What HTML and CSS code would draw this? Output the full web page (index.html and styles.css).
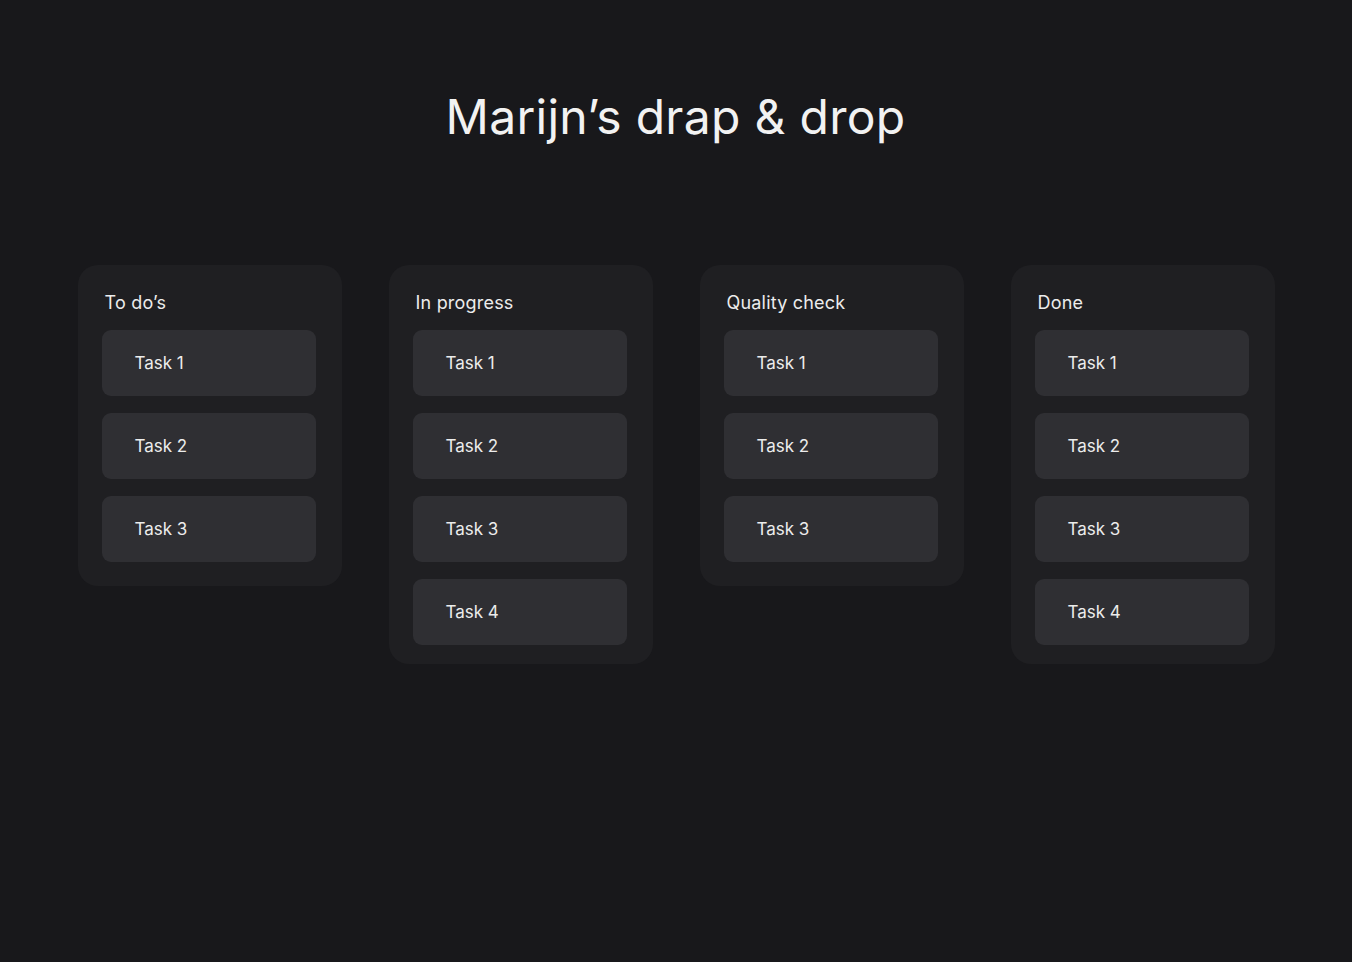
FILE: index.html
```html
<!DOCTYPE html>
<html lang="en">
<head>
<meta charset="utf-8">
<title>Marijn's drap &amp; drop</title>
<link rel="stylesheet" href="styles.css">
</head>
<body>
<main class="page">
  <h1 class="title">Marijn’s drap &amp; drop</h1>
  <section class="board">
    <div class="column">
      <h2 class="column-title">To do’s</h2>
      <div class="task">Task 1</div>
      <div class="task">Task 2</div>
      <div class="task">Task 3</div>
    </div>
    <div class="column">
      <h2 class="column-title">In progress</h2>
      <div class="task">Task 1</div>
      <div class="task">Task 2</div>
      <div class="task">Task 3</div>
      <div class="task">Task 4</div>
    </div>
    <div class="column">
      <h2 class="column-title">Quality check</h2>
      <div class="task">Task 1</div>
      <div class="task">Task 2</div>
      <div class="task">Task 3</div>
    </div>
    <div class="column">
      <h2 class="column-title">Done</h2>
      <div class="task">Task 1</div>
      <div class="task">Task 2</div>
      <div class="task">Task 3</div>
      <div class="task">Task 4</div>
    </div>
  </section>
</main>
</body>
</html>
```
FILE: styles.css
```css
html, body {
  margin: 0;
  padding: 0;
  background: #18181b;
}
body {
  font-family: Inter, "Open Sans", sans-serif;
  color: #ececec;
  min-height: 962px;
}
.page {
  display: flex;
  flex-direction: column;
  align-items: center;
  padding-top: 88px;
}
.title {
  margin: 0 0 0 -1px;
  font-size: 48px;
  font-weight: 400;
  line-height: 58px;
  color: #f2f2f2;
  letter-spacing: 0.3px;
}
.board {
  margin-top: 119px;
  display: flex;
  align-items: flex-start;
  gap: 47px;
}
.column {
  width: 264px;
  min-height: 321px;
  box-sizing: border-box;
  padding: 24px 26px 19px 24px;
  background: #1f1f22;
  border-radius: 20px;
  display: flex;
  flex-direction: column;
  gap: 17px;
}
.column-title {
  margin: 1px 0 -2px 0;
  padding-left: 3px;
  font-size: 18px;
  font-weight: 400;
  line-height: 25px;
  letter-spacing: 0.2px;
  color: #ececec;
}
.task {
  height: 66px;
  flex: none;
  box-sizing: border-box;
  padding-left: 33px;
  display: flex;
  align-items: center;
  background: #2f2f33;
  border-radius: 9px;
  font-size: 17px;
  color: #ececec;
}
```
